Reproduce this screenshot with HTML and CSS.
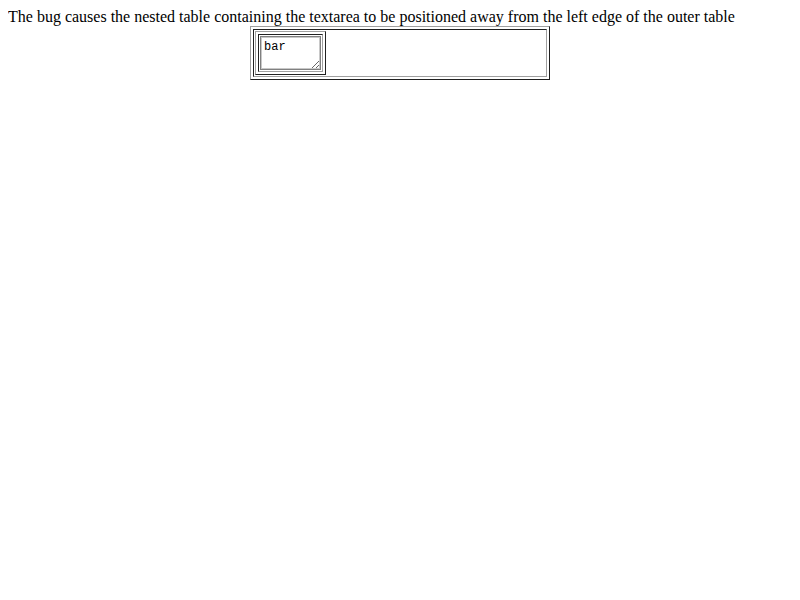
FILE: index.html
```html
<!DOCTYPE html>
<html>
<head>
<meta charset="utf-8">
<link rel="stylesheet" href="styles.css">
</head>
<body>
<p class="intro">The bug causes the nested table containing the textarea to be positioned away from the left edge of the outer table</p>
<table class="outer">
<tr><td class="cell">
<table class="inner">
<tr><td class="cell"><textarea class="ta">bar</textarea></td></tr>
</table>
</td></tr>
</table>
</body>
</html>
```
FILE: styles.css
```css
body {
  margin: 8px;
  font-family: "Liberation Serif", "Times New Roman", serif;
  font-size: 16px;
  background: #fff;
  color: #000;
}
.intro {
  margin: 0;
  line-height: 18px;
}
.outer {
  width: 300px;
  margin: 0 auto;
  border: 1px solid;
  border-color: #a0a0a0 #202020 #202020 #a0a0a0;
  border-spacing: 2px;
}
.inner {
  border: 1px solid;
  border-color: #a0a0a0 #202020 #202020 #a0a0a0;
  border-spacing: 2px;
}
.cell {
  padding: 1px;
  border: 1px solid;
  border-color: #202020 #a0a0a0 #a0a0a0 #202020;
}
.ta {
  display: block;
  box-sizing: border-box;
  width: 61px;
  height: 34px;
  margin: 0;
  padding: 3px 3px;
  border: 1px solid #808080;
  box-shadow: inset 0 0 0 1px #c8c8c8;
  background: #fff;
  color: #000;
  font-family: "Liberation Mono", "Courier New", monospace;
  font-size: 12px;
  line-height: 14px;
  resize: both;
  overflow: hidden;
}
```
